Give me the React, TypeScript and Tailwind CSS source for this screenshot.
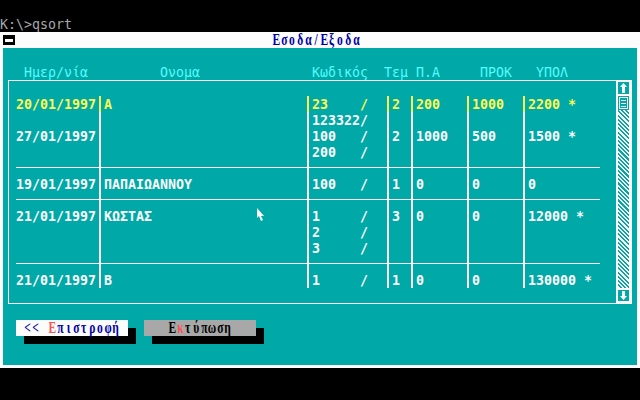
import React from "react"

interface Row {
  date?: string
  name?: string
  code?: string
  tem?: string
  pa?: string
  prok?: string
  ypol?: string
  hl?: boolean
  sep?: boolean
}

const rows: Row[] = [
  { date: "20/01/1997", name: "A", code: "23    /", tem: "2", pa: "200", prok: "1000", ypol: "2200 *", hl: true },
  { code: "123322/" },
  { date: "27/01/1997", code: "100   /", tem: "2", pa: "1000", prok: "500", ypol: "1500 *" },
  { code: "200   /" },
  { sep: true },
  { date: "19/01/1997", name: "ΠΑΠΑΙΩΑΝΝΟΥ", code: "100   /", tem: "1", pa: "0", prok: "0", ypol: "0" },
  { sep: true },
  { date: "21/01/1997", name: "ΚΩΣΤΑΣ", code: "1     /", tem: "3", pa: "0", prok: "0", ypol: "12000 *" },
  { code: "2     /" },
  { code: "3     /" },
  { sep: true },
  { date: "21/01/1997", name: "B", code: "1     /", tem: "1", pa: "0", prok: "0", ypol: "130000 *" },
]

// every glyph sits in its own 8px text-mode cell, squeezed to fit
function Chars({ s, className = "", serif }: { s: string; className?: string; serif?: boolean }) {
  return (
    <span className={`flex whitespace-nowrap ${className}`}>
      {Array.from(s).map((c, i) => (
        <span key={i} className="inline-flex w-[8px] shrink-0 justify-center">
          <span className={serif ? "inline-block scale-x-[0.72]" : "inline-block scale-x-[0.97]"}>
            {c === " " ? "\u00a0" : c}
          </span>
        </span>
      ))}
    </span>
  )
}

function Cell({ w, text, sep }: { w: string; text?: string; sep?: boolean }) {
  return (
    <div className={`${w} h-[16px] shrink-0`}>
      {sep ? <div className="mt-[7px] h-px bg-[#fcfcfc]" /> : text ? <Chars s={text} /> : null}
    </div>
  )
}

function Bar({ sep, hl }: { sep?: boolean; hl?: boolean }) {
  return (
    <div className="flex w-[8px] h-[16px] shrink-0">
      <div className="w-[3px]">{sep && <div className="mt-[7px] h-px bg-[#fcfcfc]" />}</div>
      <div className={`w-[2px] ${hl ? "bg-[#fcfc54]" : "bg-[#fcfcfc]"}`} />
      <div className="w-[3px]">{sep && <div className="mt-[7px] h-px bg-[#fcfcfc]" />}</div>
    </div>
  )
}

function DataRow({ r }: { r: Row }) {
  return (
    <div className={`flex h-[16px] font-bold ${r.hl ? "text-[#fcfc54]" : "text-[#fcfcfc]"}`}>
      <div className="w-[7px] shrink-0" />
      <Cell w="w-[80px]" text={r.date} sep={r.sep} />
      <Bar sep={r.sep} hl={r.hl} />
      <Cell w="w-[200px]" text={r.name} sep={r.sep} />
      <Bar sep={r.sep} hl={r.hl} />
      <Cell w="w-[72px]" text={r.code} sep={r.sep} />
      <Bar sep={r.sep} hl={r.hl} />
      <Cell w="w-[16px]" text={r.tem} sep={r.sep} />
      <Bar sep={r.sep} hl={r.hl} />
      <Cell w="w-[48px]" text={r.pa} sep={r.sep} />
      <Bar sep={r.sep} hl={r.hl} />
      <Cell w="w-[48px]" text={r.prok} sep={r.sep} />
      <Bar sep={r.sep} hl={r.hl} />
      <Cell w="w-[72px]" text={r.ypol} sep={r.sep} />
    </div>
  )
}

function ScrollBar() {
  return (
    <div className="w-[16px] shrink-0 bg-[#fcfcfc] flex flex-col pl-[2px] pr-[3px] pt-[1px] pb-[2px]">
      <div className="h-[12px] bg-[#00a8a8]">
        <svg width="11" height="12" viewBox="0 0 11 12">
          <polygon points="5.5,1 9,5 7,5 7,11 4,11 4,5 2,5" fill="#fcfcfc" />
        </svg>
      </div>
      <div className="mt-[2px] h-[14px] bg-[#00a8a8]">
        <svg width="11" height="14" viewBox="0 0 11 14">
          <rect x="1.5" y="1.5" width="8" height="11" fill="none" stroke="#fcfcfc" strokeWidth="1" />
          <path d="M3 4.5h5M3 7.5h5M3 10.5h5" stroke="#fcfcfc" strokeWidth="1" />
        </svg>
      </div>
      <div className="flex-1 bg-[image:repeating-linear-gradient(45deg,#fcfcfc_0px,#fcfcfc_1.5px,#00a8a8_1.5px,#00a8a8_3px)]" />
      <div className="mt-[2px] h-[11px] bg-[#00a8a8]">
        <svg width="11" height="11" viewBox="0 0 11 11">
          <polygon points="4,1 7,1 7,6 9,6 5.5,10 2,6 4,6" fill="#fcfcfc" />
        </svg>
      </div>
    </div>
  )
}

export default function App() {
  return (
    <div className="relative w-[640px] h-[400px] overflow-hidden bg-black font-['DejaVu_Sans_Mono',monospace] text-[13.7px] leading-[16px]">
      <div className="h-[16px]" />
      <div className="h-[16px] text-[#a8a8a8]">
        <Chars s="K:\>qsort" />
      </div>

      <div className="h-[336px] bg-[#fcfcfc] flex flex-col">
        <div className="h-[16px] flex items-center">
          <div className="ml-[3px] w-[12px] h-[10px] bg-black flex items-center justify-center">
            <div className="w-[8px] h-[3px] bg-[#fcfcfc]" />
          </div>
          <Chars
            s="Εσοδα/Εξοδα"
            serif
            className="ml-[257px] font-['Liberation_Serif',serif] font-bold text-[16px] text-[#0000a8]"
          />
        </div>

        <div className="flex-1 mx-[3px] mb-[3px] bg-[#00a8a8] pt-[16px] flex flex-col">
          <div className="h-[16px] flex text-[#54fcfc]">
            <div className="w-[21px] shrink-0" />
            <div className="w-[136px] shrink-0"><Chars s="Ημερ/νία" /></div>
            <div className="w-[152px] shrink-0"><Chars s="Ονομα" /></div>
            <div className="w-[72px] shrink-0"><Chars s="Κωδικός" /></div>
            <div className="w-[32px] shrink-0"><Chars s="Τεμ" /></div>
            <div className="w-[64px] shrink-0"><Chars s="Π.Α" /></div>
            <div className="w-[56px] shrink-0"><Chars s="ΠΡΟΚ" /></div>
            <div className="w-[64px] shrink-0"><Chars s="ΥΠΟΛ" /></div>
          </div>

          <div className="ml-[5px] w-[624px] h-[224px] border-l border-y border-[#fcfcfc] flex">
            <div className="w-[607px] pt-[15px] flex flex-col">
              {rows.map((r, i) => (
                <DataRow key={i} r={r} />
              ))}
            </div>
            <ScrollBar />
          </div>

          <div className="mt-[16px] ml-[13px] flex gap-[16px] font-['Liberation_Serif',serif] font-bold text-[16px]">
            <div className="w-[112px] h-[16px] bg-[#fcfcfc] shadow-[8px_8px_0_#000] flex text-[#0000a8]">
              <Chars s=" << " serif />
              <Chars s="Ε" serif className="text-[#fc5454]" />
              <Chars s="πιστροφή " serif />
            </div>
            <div className="w-[112px] h-[16px] bg-[#a8a8a8] shadow-[8px_8px_0_#000] flex text-black">
              <Chars s="   Ε" serif />
              <Chars s="κ" serif className="text-[#fc5454]" />
              <Chars s="τύπωση   " serif />
            </div>
          </div>
        </div>
      </div>

      {/* mouse pointer */}
      <svg className="absolute left-[257px] top-[208px]" width="9" height="15" viewBox="0 0 9 15">
        <polygon points="0,0 0,10 2,8 4,13 6,12 4,8 7,8" fill="#fcfcfc" />
      </svg>
    </div>
  )
}
